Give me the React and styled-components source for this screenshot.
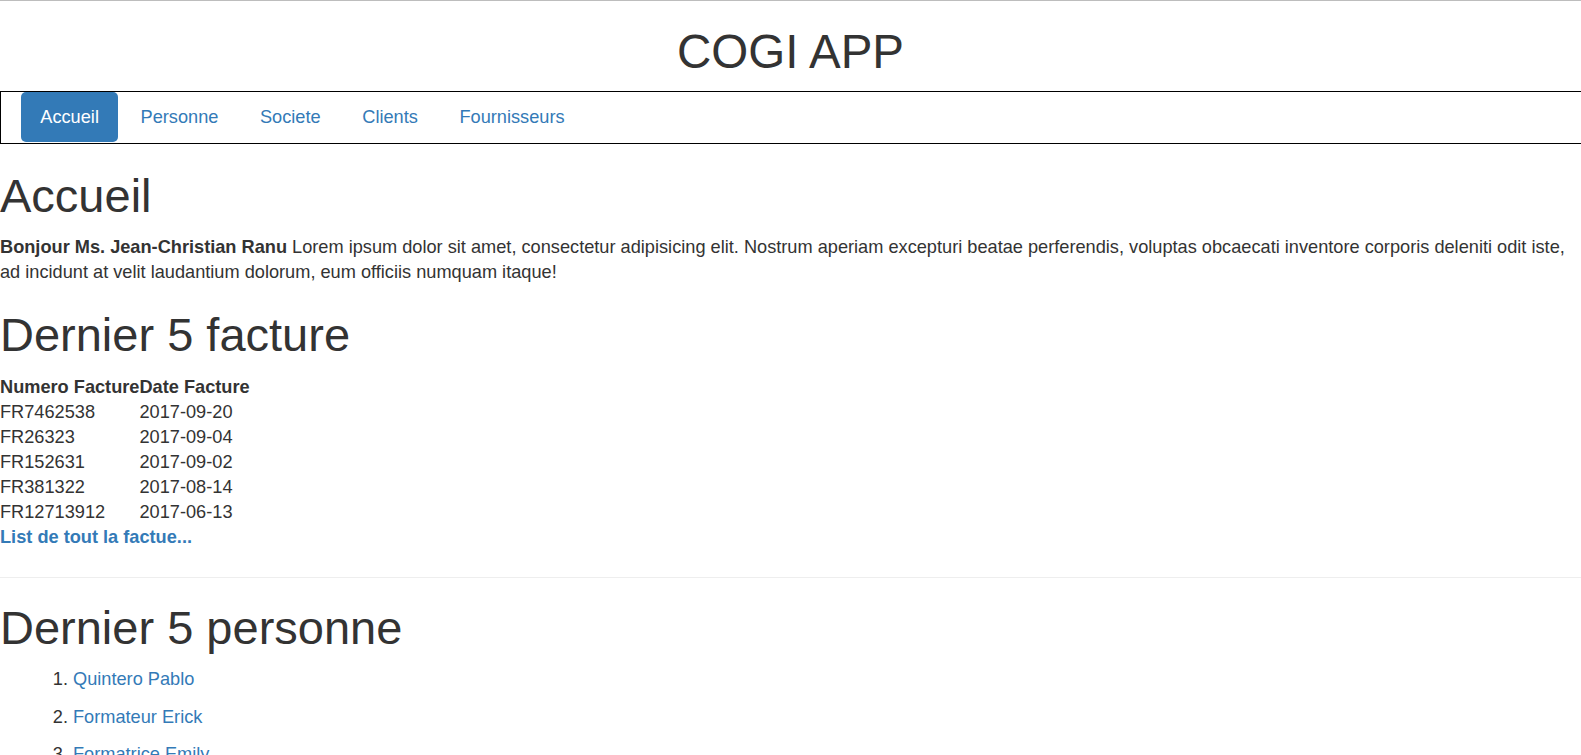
import React from 'react';
import styled, { createGlobalStyle } from 'styled-components';

// Page rendered at roughly 125-130% of the usual bootstrap sizes
const GlobalStyle = createGlobalStyle`
  html {
    scrollbar-width: none;
  }
  body {
    margin: 0;
    border-top: 1px solid #bdbdbd;
    background: #fff;
    color: #333;
    font-family: "Liberation Sans", Arial, Helvetica, sans-serif;
    font-size: 18.2px;
    line-height: 25px;
  }
  * {
    box-sizing: border-box;
  }
`;

const AppTitle = styled.h1`
  margin: 26px 0 14.5px;
  font-size: 47.5px;
  font-weight: 500;
  line-height: 49.5px;
  text-align: center;
`;

const NavBar = styled.ul`
  display: flex;
  margin: 0;
  padding: 0 0 1px 20px;
  list-style: none;
  border: 1px solid #000;
  border-right: none;
`;

const NavItem = styled.li`
  & + & {
    margin-left: 3px;
  }
`;

const NavLink = styled.a`
  display: block;
  padding: 12.5px 19.3px;
  border-radius: 5px;
  text-decoration: none;
  color: ${({ active }) => (active ? '#fff' : '#337ab7')};
  background: ${({ active }) => (active ? '#337ab7' : 'transparent')};
`;

const Title = styled.h1`
  margin: ${({ first }) => (first ? '27px' : '25px')} 0 12.5px;
  font-size: 47px;
  font-weight: 500;
  line-height: 49.5px;
`;

const Intro = styled.p`
  margin: 0 0 12.5px;
  padding-top: 2px;
`;

// margin collapses with the heading above, so it has to exceed 12.5px
const InvoiceTable = styled.table`
  margin-top: 15.5px;
  border-collapse: collapse;
  border-spacing: 0;
`;

const Th = styled.th`
  padding: 0;
  text-align: left;
  font-weight: 700;
`;

const Td = styled.td`
  padding: 0;
`;

const MoreLink = styled.a`
  display: block;
  color: #337ab7;
  font-weight: 700;
  text-decoration: none;
`;

const Divider = styled.hr`
  margin: 27px 0 25px;
  border: 0;
  border-top: 1px solid #eee;
`;

const PeopleList = styled.ol`
  margin: 14.5px 0 12.5px;
  padding-left: 73px;
`;

const PersonItem = styled.li`
  margin-bottom: 12.5px;
`;

const PersonLink = styled.a`
  color: #337ab7;
  text-decoration: none;
`;

const menu = ['Accueil', 'Personne', 'Societe', 'Clients', 'Fournisseurs'];

const factures = [
  ['FR7462538', '2017-09-20'],
  ['FR26323', '2017-09-04'],
  ['FR152631', '2017-09-02'],
  ['FR381322', '2017-08-14'],
  ['FR12713912', '2017-06-13'],
];

const personnes = ['Quintero Pablo', 'Formateur Erick', 'Formatrice Emily'];

export default function App() {
  return (
    <>
      <GlobalStyle />
      <header>
        <AppTitle>COGI APP</AppTitle>
        <nav>
          <NavBar>
            {menu.map((item, i) => (
              <NavItem key={item}>
                <NavLink href="#" active={i === 0 ? 1 : 0}>{item}</NavLink>
              </NavItem>
            ))}
          </NavBar>
        </nav>
      </header>

      <main>
        <Title first>Accueil</Title>
        <Intro>
          <b>Bonjour Ms. Jean-Christian Ranu</b> Lorem ipsum dolor sit amet, consectetur adipisicing
          elit. Nostrum aperiam excepturi beatae perferendis, voluptas obcaecati inventore corporis
          deleniti odit iste, ad incidunt at velit laudantium dolorum, eum officiis numquam itaque!
        </Intro>

        <Title>Dernier 5 facture</Title>
        <InvoiceTable>
          <thead>
            <tr>
              <Th>Numero Facture</Th>
              <Th>Date Facture</Th>
            </tr>
          </thead>
          <tbody>
            {factures.map(([num, date]) => (
              <tr key={num}>
                <Td>{num}</Td>
                <Td>{date}</Td>
              </tr>
            ))}
          </tbody>
        </InvoiceTable>
        <MoreLink href="#">List de tout la factue...</MoreLink>

        <Divider />

        <Title>Dernier 5 personne</Title>
        <PeopleList>
          {personnes.map(p => (
            <PersonItem key={p}>
              <PersonLink href="#">{p}</PersonLink>
            </PersonItem>
          ))}
        </PeopleList>
      </main>
    </>
  );
}
